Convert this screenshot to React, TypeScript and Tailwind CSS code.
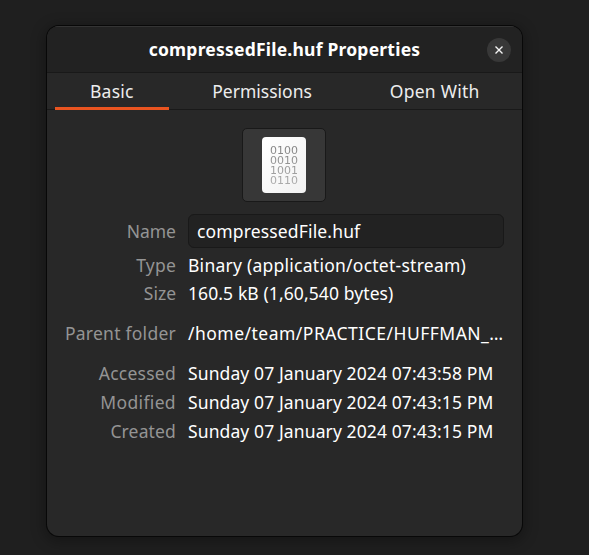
import React from "react";

type Row = { label: string; value: string; labelClass: string; valueClass: string; rowClass: string };

const rows: Row[] = [
  { label: "Type", value: "Binary (application/octet-stream)", labelClass: "tracking-[0.2px]", valueClass: "tracking-[0.25px]", rowClass: "mt-[3px] h-[28px]" },
  { label: "Size", value: "160.5 kB (1,60,540 bytes)", labelClass: "", valueClass: "tracking-[0.1px]", rowClass: "h-[28px]" },
  { label: "Parent folder", value: "/home/team/PRACTICE/HUFFMAN_…", labelClass: "tracking-[0.25px]", valueClass: "tracking-[0.48px]", rowClass: "mt-[12px] h-[29px]" },
  { label: "Accessed", value: "Sunday 07 January 2024 07:43:58 PM", labelClass: "tracking-[0.25px]", valueClass: "tracking-[0.11px]", rowClass: "mt-[11px] h-[29px]" },
  { label: "Modified", value: "Sunday 07 January 2024 07:43:15 PM", labelClass: "tracking-[0.35px]", valueClass: "tracking-[0.11px]", rowClass: "h-[29px]" },
  { label: "Created", value: "Sunday 07 January 2024 07:43:15 PM", labelClass: "tracking-[0.15px]", valueClass: "tracking-[0.11px]", rowClass: "h-[29px]" },
];

function FileIcon() {
  return (
    <div className="flex h-[56px] w-[44px] justify-center rounded-[4px] bg-gradient-to-br from-white to-[#f2f2f2] pt-[9px]">
      <p className="h-[40px] bg-gradient-to-b from-[#808080] to-[#adadad] bg-clip-text text-center font-['DejaVu_Sans',sans-serif] text-[11px] leading-[10px] text-transparent">
        0100
        <br />
        0010
        <br />
        1001
        <br />
        0110
      </p>
    </div>
  );
}

export default function App() {
  return (
    <div className="h-[555px] w-[589px] overflow-hidden bg-[#1f1f1f] pt-[26px] pl-[47px] font-['Noto_Sans',sans-serif] text-[17.5px] text-white">
      <div className="flex h-[510px] w-[475px] flex-col overflow-hidden rounded-[12px] bg-[#282828] shadow-[0_0_0_1px_#080808,0_3px_14px_3px_rgba(0,0,0,0.3)]">
        <header className="flex h-[47px] shrink-0 items-center border-t border-b border-t-[#343434] border-b-[#191919] bg-[#222222] pr-[11px] pl-[35px]">
          <h1 className="flex-1 text-center font-bold tracking-[0.22px] whitespace-nowrap">compressedFile.huf Properties</h1>
          <button aria-label="Close" className="flex size-[24px] items-center justify-center rounded-full bg-[#383838]">
            <svg width="8" height="8" viewBox="0 0 8 8" stroke="#f5f5f5" strokeWidth="1.4" fill="none">
              <path d="M0.5 0.5 7.5 7.5M7.5 0.5 0.5 7.5" />
            </svg>
          </button>
        </header>
        <nav className="flex h-[37px] shrink-0 gap-[8px] border-b border-[#191919] px-[8px] text-[#ededed]">
          <button className="-mb-px h-[37px] w-[114px] border-b-[3px] border-[#e95420] pt-[2px] tracking-[0.25px]">Basic</button>
          <button className="w-[171px]">Permissions</button>
          <button className="w-[159px] tracking-[0.25px]">Open With</button>
        </nav>
        <main className="flex flex-col pt-[18px]">
          <button className="ml-[195px] flex h-[74px] w-[84px] items-center justify-center rounded-[5px] border border-[#191919] bg-[#373737]">
            <FileIcon />
          </button>
          <div className="mt-[12px] flex h-[34px] items-center">
            <span className="w-[129px] text-right text-[#949494]">Name</span>
            <div className="ml-[12px] flex h-[34px] w-[316px] items-center rounded-[6px] border border-[#191919] bg-[#222222] pl-[8px] tracking-[0.15px]">compressedFile.huf</div>
          </div>
          {rows.map((row) => (
            <div key={row.label} className={`flex items-center whitespace-nowrap ${row.rowClass}`}>
              <span className={`w-[129px] text-right text-[#949494] ${row.labelClass}`}>{row.label}</span>
              <span className={`ml-[12px] ${row.valueClass}`}>{row.value}</span>
            </div>
          ))}
        </main>
      </div>
    </div>
  );
}
